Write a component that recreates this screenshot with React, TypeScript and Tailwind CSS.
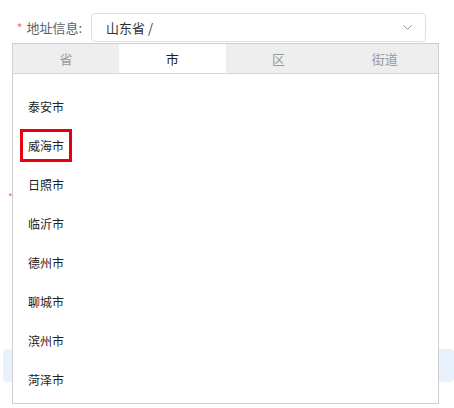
import { ChevronDown } from "lucide-react";

const TABS = ["省", "市", "区", "街道"];
const CITIES = ["泰安市", "威海市", "日照市", "临沂市", "德州市", "聊城市", "滨州市", "菏泽市"];

const FONT = { fontFamily: '"Microsoft YaHei", "Noto Sans CJK SC", "Noto Sans", sans-serif' };

export default function App() {
  return (
    <div className="relative w-[454px] h-[408px] bg-white overflow-hidden" style={FONT}>
      {/* Form underneath */}
      <div className="flex items-center pt-[13px]">
        <div className="w-[82px] flex justify-end items-center text-[13px] text-[#606266]">
          <span className="text-[#f56c6c] mr-[4px] text-[12px]">*</span>
          <span>地址信息:</span>
        </div>
        <div className="ml-[9px] w-[335px] h-[29px] border border-[#dcdfe6] rounded-[4px] flex items-center justify-between pl-[14px] pr-[10px] text-[13px] text-[#333]">
          <span>山东省 /</span>
          <ChevronDown size={15} strokeWidth={1.3} className="text-[#777]" />
        </div>
      </div>
      <div className="mt-[150px] pl-[8px] text-[10px] leading-none text-[#f56c6c]">*</div>
      <div className="mt-[147px] ml-[3px] w-[451px] h-[33px] rounded-[4px] bg-[#e8f2fc]" />

      {/* Cascader dropdown */}
      <div className="absolute left-[12px] top-[43px] w-[427px] h-[361px] bg-white border border-[#cfcfcf]">
        <div className="grid grid-cols-4 h-[30px] bg-[#eeeeee] border-b border-[#d6d6d6]">
          {TABS.map((t, i) => (
            <div
              key={t}
              className={`flex items-center justify-center text-[13px] ${
                i === 1 ? "bg-white text-[#222]" : "text-[#9a9a9a]"
              }`}
            >
              {t}
            </div>
          ))}
        </div>
        <ul className="pt-[13px]">
          {CITIES.map((c, i) => (
            <li key={c} className="h-[39px] flex items-center pl-[15px] text-[12px] text-[#222]">
              {i === 1 ? (
                <span className="-ml-[8px] border-[3px] border-[#e60012] px-[5px] h-[33px] flex items-center">
                  {c}
                </span>
              ) : (
                c
              )}
            </li>
          ))}
        </ul>
      </div>
    </div>
  );
}
